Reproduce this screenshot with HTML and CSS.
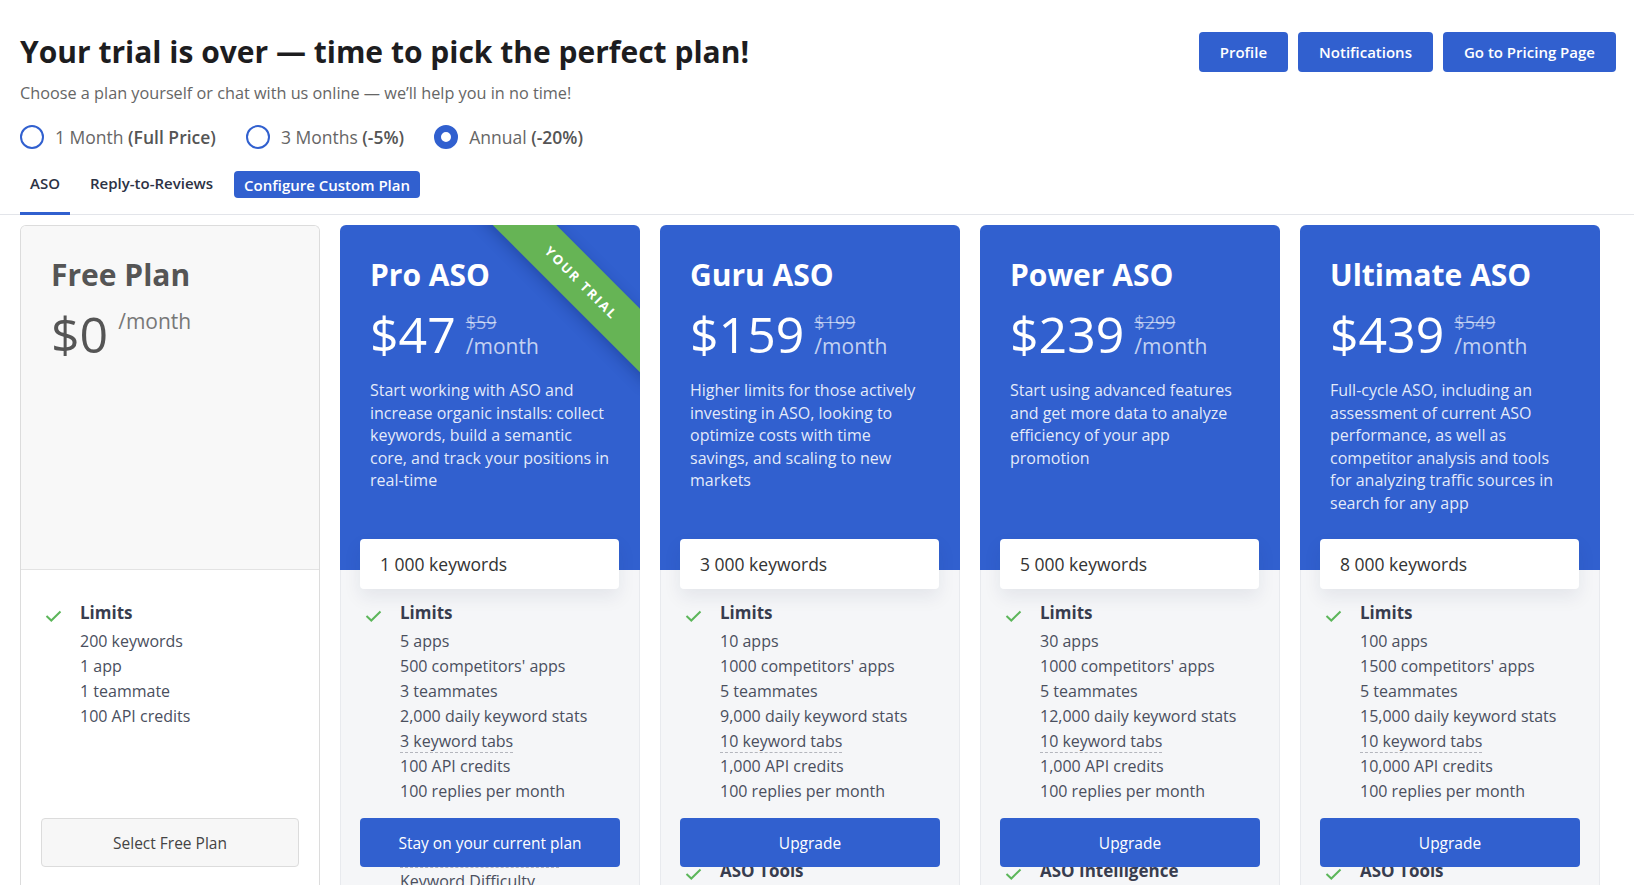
FILE: index.html
```html
<!DOCTYPE html>
<html>
<head>
  <meta charset="UTF-8">
  <title>Pick a plan</title>
  <link rel="stylesheet" href="styles.css">
</head>
<body>
  <header class="page-head">
    <div class="head-row">
      <div>
        <h1 class="page-title">Your trial is over — time to pick the perfect plan!</h1>
        <p class="page-sub">Choose a plan yourself or chat with us online — we’ll help you in no time!</p>
      </div>
      <div class="top-actions">
        <button class="top-btn">Profile</button>
        <button class="top-btn">Notifications</button>
        <button class="top-btn">Go to Pricing Page</button>
      </div>
    </div>

    <div class="periods">
      <label class="period"><span class="radio"></span>1 Month <b>(Full Price)</b></label>
      <label class="period"><span class="radio"></span>3 Months <b>(-5%)</b></label>
      <label class="period"><span class="radio radio--on"></span>Annual <b>(-20%)</b></label>
    </div>
  </header>

  <nav class="tabs">
    <a class="tab tab--active">ASO</a>
    <a class="tab">Reply-to-Reviews</a>
    <button class="custom-btn">Configure Custom Plan</button>
  </nav>

  <main class="plans">
    <!-- Free -->
    <div class="plan plan--free">
      <div class="plan-head">
        <h2 class="plan-name">Free Plan</h2>
        <div class="plan-price">
          <span class="price-amount">$0</span>
          <span class="price-meta"><span class="price-period">/month</span></span>
        </div>
      </div>
      <div class="plan-body">
        <div class="feature-group">
          <svg class="check" viewBox="0 0 17 12"><path d="M1.5 6l4.8 4.5L15.5 1.5" /></svg>
          <div>
            <h3 class="feature-title">Limits</h3>
            <ul class="feature-list">
              <li>200 keywords</li>
              <li>1 app</li>
              <li>1 teammate</li>
              <li>100 API credits</li>
            </ul>
          </div>
        </div>
      </div>
      <button class="plan-btn plan-btn--light">Select Free Plan</button>
    </div>

    <!-- Pro -->
    <div class="plan">
      <div class="plan-head">
        <div class="ribbon">Your trial</div>
        <h2 class="plan-name">Pro ASO</h2>
        <div class="plan-price">
          <span class="price-amount">$47</span>
          <span class="price-meta"><s class="price-old">$59</s><span class="price-period">/month</span></span>
        </div>
        <p class="plan-desc">Start working with ASO and increase organic installs: collect keywords, build a semantic core, and track your positions in real-time</p>
      </div>
      <div class="plan-body">
        <div class="plan-keywords">1 000 keywords</div>
        <div class="feature-group">
          <svg class="check" viewBox="0 0 17 12"><path d="M1.5 6l4.8 4.5L15.5 1.5" /></svg>
          <div>
            <h3 class="feature-title">Limits</h3>
            <ul class="feature-list">
              <li>5 apps</li>
              <li>500 competitors' apps</li>
              <li>3 teammates</li>
              <li>2,000 daily keyword stats</li>
              <li><span class="hint">3 keyword tabs</span></li>
              <li>100 API credits</li>
              <li>100 replies per month</li>
            </ul>
          </div>
        </div>
        <div class="feature-group">
          <svg class="check" viewBox="0 0 17 12"><path d="M1.5 6l4.8 4.5L15.5 1.5" /></svg>
          <div>
            <h3 class="feature-title">ASO Tools</h3>
            <ul class="feature-list">
              <li><span class="hint">Keyword Suggestions</span></li>
              <li>Keyword Difficulty</li>
              <li>Keyword Tracking</li>
            </ul>
          </div>
        </div>
      </div>
      <button class="plan-btn">Stay on your current plan</button>
    </div>

    <!-- Guru -->
    <div class="plan">
      <div class="plan-head">
        <h2 class="plan-name">Guru ASO</h2>
        <div class="plan-price">
          <span class="price-amount">$159</span>
          <span class="price-meta"><s class="price-old">$199</s><span class="price-period">/month</span></span>
        </div>
        <p class="plan-desc">Higher limits for those actively investing in ASO, looking to optimize costs with time savings, and scaling to new markets</p>
      </div>
      <div class="plan-body">
        <div class="plan-keywords">3 000 keywords</div>
        <div class="feature-group">
          <svg class="check" viewBox="0 0 17 12"><path d="M1.5 6l4.8 4.5L15.5 1.5" /></svg>
          <div>
            <h3 class="feature-title">Limits</h3>
            <ul class="feature-list">
              <li>10 apps</li>
              <li>1000 competitors' apps</li>
              <li>5 teammates</li>
              <li>9,000 daily keyword stats</li>
              <li><span class="hint">10 keyword tabs</span></li>
              <li>1,000 API credits</li>
              <li>100 replies per month</li>
            </ul>
          </div>
        </div>
        <p class="includes">Everything in Pro ASO, plus:</p>
        <div class="feature-group">
          <svg class="check" viewBox="0 0 17 12"><path d="M1.5 6l4.8 4.5L15.5 1.5" /></svg>
          <div>
            <h3 class="feature-title">ASO Tools</h3>
            <ul class="feature-list">
              <li>Keyword Suggestions</li>
              <li>Keyword Difficulty</li>
            </ul>
          </div>
        </div>
      </div>
      <button class="plan-btn">Upgrade</button>
    </div>

    <!-- Power -->
    <div class="plan">
      <div class="plan-head">
        <h2 class="plan-name">Power ASO</h2>
        <div class="plan-price">
          <span class="price-amount">$239</span>
          <span class="price-meta"><s class="price-old">$299</s><span class="price-period">/month</span></span>
        </div>
        <p class="plan-desc">Start using advanced features and get more data to analyze efficiency of your app promotion</p>
      </div>
      <div class="plan-body">
        <div class="plan-keywords">5 000 keywords</div>
        <div class="feature-group">
          <svg class="check" viewBox="0 0 17 12"><path d="M1.5 6l4.8 4.5L15.5 1.5" /></svg>
          <div>
            <h3 class="feature-title">Limits</h3>
            <ul class="feature-list">
              <li>30 apps</li>
              <li>1000 competitors' apps</li>
              <li>5 teammates</li>
              <li>12,000 daily keyword stats</li>
              <li><span class="hint">10 keyword tabs</span></li>
              <li>1,000 API credits</li>
              <li>100 replies per month</li>
            </ul>
          </div>
        </div>
        <p class="includes">Everything in Guru ASO, plus:</p>
        <div class="feature-group">
          <svg class="check" viewBox="0 0 17 12"><path d="M1.5 6l4.8 4.5L15.5 1.5" /></svg>
          <div>
            <h3 class="feature-title">ASO Intelligence</h3>
            <ul class="feature-list">
              <li>Search Ads Intelligence</li>
              <li>Category Rankings</li>
            </ul>
          </div>
        </div>
      </div>
      <button class="plan-btn">Upgrade</button>
    </div>

    <!-- Ultimate -->
    <div class="plan">
      <div class="plan-head">
        <h2 class="plan-name">Ultimate ASO</h2>
        <div class="plan-price">
          <span class="price-amount">$439</span>
          <span class="price-meta"><s class="price-old">$549</s><span class="price-period">/month</span></span>
        </div>
        <p class="plan-desc">Full-cycle ASO, including an assessment of current ASO performance, as well as competitor analysis and tools for analyzing traffic sources in search for any app</p>
      </div>
      <div class="plan-body">
        <div class="plan-keywords">8 000 keywords</div>
        <div class="feature-group">
          <svg class="check" viewBox="0 0 17 12"><path d="M1.5 6l4.8 4.5L15.5 1.5" /></svg>
          <div>
            <h3 class="feature-title">Limits</h3>
            <ul class="feature-list">
              <li>100 apps</li>
              <li>1500 competitors' apps</li>
              <li>5 teammates</li>
              <li>15,000 daily keyword stats</li>
              <li><span class="hint">10 keyword tabs</span></li>
              <li>10,000 API credits</li>
              <li>100 replies per month</li>
            </ul>
          </div>
        </div>
        <p class="includes">Everything in Power ASO, plus:</p>
        <div class="feature-group">
          <svg class="check" viewBox="0 0 17 12"><path d="M1.5 6l4.8 4.5L15.5 1.5" /></svg>
          <div>
            <h3 class="feature-title">ASO Tools</h3>
            <ul class="feature-list">
              <li>Keyword Suggestions</li>
              <li>Keyword Difficulty</li>
            </ul>
          </div>
        </div>
      </div>
      <button class="plan-btn">Upgrade</button>
    </div>
  </main>
</body>
</html>
```

FILE: styles.css
```css
body {
  font-family: 'Open Sans', 'Noto Sans', sans-serif;
  margin: 0;
  height: 100vh;
  display: flex;
  flex-direction: column;
  overflow: hidden;
  background-color: #fff;
  color: #333;
}

/* header */
.page-head {
  padding: 30px 18px 0 20px;
}
.head-row {
  display: flex;
  justify-content: space-between;
  align-items: flex-start;
}
.page-title {
  margin: 0;
  font-size: 30px;
  line-height: 44px;
  font-weight: 700;
  color: #1d1d1f;
}
.page-sub {
  margin: 7px 0 0;
  font-size: 16.25px;
  line-height: 24px;
  color: #666;
}
.top-actions {
  display: flex;
  gap: 10px;
  margin-top: 2px;
}
.top-btn {
  height: 40px;
  padding: 0 21px;
  border: none;
  border-radius: 4px;
  background-color: #3160cf;
  color: #fff;
  font-family: inherit;
  font-size: 15px;
  font-weight: 600;
  cursor: pointer;
}

/* billing period radios */
.periods {
  display: flex;
  align-items: center;
  gap: 30px;
  margin-top: 20px;
  height: 24px;
}
.period {
  display: flex;
  align-items: center;
  font-size: 17.5px;
  color: #666;
  white-space: pre;
}
.period b {
  font-weight: 600;
  color: #555;
}
.radio {
  width: 24px;
  height: 24px;
  box-sizing: border-box;
  border: 2px solid #3160cf;
  border-radius: 50%;
  margin-right: 11px;
}
.radio--on {
  border-width: 7px;
}

/* tabs */
.tabs {
  display: flex;
  align-items: flex-start;
  margin-top: 15px;
  padding: 0 20px;
  border-bottom: 1px solid #e3e5ea;
}
.tab {
  padding: 10px 10px 19px;
  margin-bottom: -1px;
  margin-right: 10px;
  border-bottom: 3px solid transparent;
  font-size: 15px;
  line-height: 19px;
  font-weight: 600;
  color: #2c3244;
  cursor: pointer;
}
.tab--active {
  border-bottom-color: #3160cf;
}
.custom-btn {
  margin: 7px 0 0 1px;
  height: 27px;
  padding: 0 10px;
  border: none;
  border-radius: 4px;
  background-color: #3160cf;
  color: #fff;
  font-family: inherit;
  font-size: 15px;
  font-weight: 600;
}

/* plan cards */
.plans {
  flex: 1;
  min-height: 0;
  display: grid;
  grid-template-columns: repeat(5, 300px);
  grid-template-rows: minmax(0, 1fr);
  gap: 20px;
  padding: 10px 20px 0;
}
.plan {
  position: relative;
  display: flex;
  flex-direction: column;
  overflow: hidden;
  border-radius: 6px 6px 0 0;
}
.plan-head {
  position: relative;
  overflow: hidden;
  flex-shrink: 0;
  height: 345px;
  box-sizing: border-box;
  padding: 30px 30px 0;
  background-color: #3160cf;
  color: #fff;
}
.plan-name {
  margin: 0;
  font-size: 30px;
  line-height: 40px;
  font-weight: 700;
}
.plan-price {
  display: flex;
  align-items: flex-start;
  margin-top: 11px;
}
.price-amount {
  font-size: 50px;
  line-height: 56px;
}
.price-meta {
  display: flex;
  flex-direction: column;
  margin: 5px 0 0 10px;
}
.price-old {
  font-size: 18px;
  line-height: 22px;
  color: rgba(255, 255, 255, 0.6);
}
.price-period {
  font-size: 21px;
  line-height: 26px;
  color: rgba(255, 255, 255, 0.72);
}
.plan-desc {
  margin: 17px 0 0;
  font-size: 16px;
  line-height: 22.5px;
  color: rgba(255, 255, 255, 0.88);
}
.ribbon {
  position: absolute;
  left: 122px;
  top: 35px;
  width: 240px;
  height: 45px;
  transform: rotate(45deg);
  display: flex;
  align-items: center;
  justify-content: center;
  background-color: #66b455;
  box-shadow: 0 4px 14px rgba(10, 30, 90, 0.3);
  font-size: 13px;
  font-weight: 700;
  letter-spacing: 2px;
  text-transform: uppercase;
}

.plan-body {
  flex: 1;
  background-color: #f5f6f8;
  border-left: 1px solid #e8eaee;
  border-right: 1px solid #e8eaee;
}
.plan-keywords {
  position: relative;
  margin: -31px 20px 0 19px;
  height: 50px;
  line-height: 50px;
  padding: 0 20px;
  border-radius: 4px;
  background-color: #fff;
  box-shadow: 0 8px 18px rgba(30, 40, 80, 0.08);
  font-size: 17.5px;
  color: #333;
}

/* free plan look */
.plan--free {
  border: 1px solid #dcdcdc;
  border-bottom: 0;
}
.plan--free .plan-head {
  height: 344px;
  padding-top: 29px;
  background-color: #f8f8f8;
  border-bottom: 1px solid #e3e3e3;
  color: #555;
}
.plan--free .price-meta {
  margin-top: 2px;
}
.plan--free .price-period {
  color: #777;
}
.plan--free .plan-body {
  padding-top: 19px;
  background-color: #fff;
  border: none;
}

/* features */
.feature-group {
  display: grid;
  grid-template-columns: 17px 1fr;
  column-gap: 18px;
  margin-top: 11px;
  padding-left: 24px;
}
.check {
  width: 17px;
  height: 12px;
  margin-top: 10px;
}
.check path {
  fill: none;
  stroke: #5cb65a;
  stroke-width: 2;
}
.feature-title {
  margin: 0 0 4px;
  font-size: 17px;
  line-height: 25px;
  font-weight: 700;
  color: #383d4f;
}
.feature-list {
  list-style: none;
  margin: 0;
  padding: 0;
  font-size: 16px;
  line-height: 25px;
  color: #4a4f5e;
}
.hint {
  border-bottom: 1px dashed #b4b6bd;
}
.includes {
  margin: 18px 0 0 60px;
  font-size: 14px;
  line-height: 25px;
  color: #777;
}

.plan-btn {
  position: absolute;
  left: 20px;
  right: 20px;
  bottom: 18px;
  height: 49px;
  border: none;
  border-radius: 4px;
  background-color: #3160cf;
  color: #fff;
  font-family: inherit;
  font-size: 15.5px;
  font-weight: 500;
  cursor: pointer;
}
.plan-btn--light {
  background-color: #f7f7f7;
  border: 1px solid #dcdcdc;
  color: #444;
}
```
